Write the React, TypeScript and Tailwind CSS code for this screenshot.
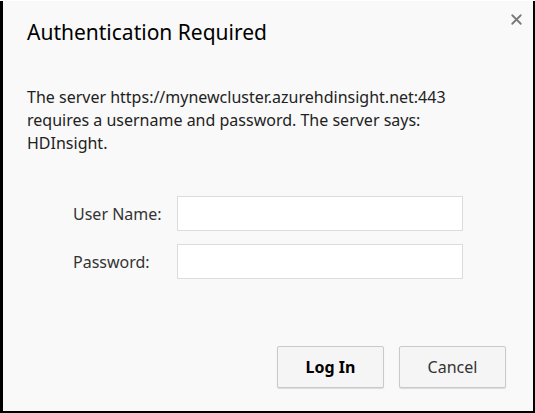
import { X } from 'lucide-react';

export default function App() {
  return (
    <div className="w-[535px] h-[413px] bg-black">
      <div
        className="relative ml-[3px] mt-px w-[530px] h-[410px] bg-[#f9f9f9] flex flex-col pl-6 pr-[27px] text-[#222]"
        style={{ fontFamily: '"Noto Sans", "Open Sans", sans-serif' }}
      >
        <button className="absolute right-[8px] top-[10px] text-[#7a7a7a]">
          <X className="w-[17px] h-[17px]" strokeWidth={2.6} />
        </button>

        <h1 className="mt-[17px] text-[21px] leading-7 text-black">Authentication Required</h1>

        <p className="mt-[40px] text-[16px] leading-[23px]">
          The server https://mynewcluster.azurehdinsight.net:443
          <br />
          requires a username and password. The server says:
          <br />
          HDInsight.
        </p>

        <div className="mt-[41px] flex flex-col gap-[13px] pl-[46px]">
          <div className="flex items-center">
            <label className="w-[104px] text-[16px] text-[#333]">User Name:</label>
            <input className="w-[286px] h-[35px] bg-white border border-[#dcdcdc] outline-none" />
          </div>
          <div className="flex items-center">
            <label className="w-[104px] text-[16px] text-[#333]">Password:</label>
            <input type="password" className="w-[286px] h-[35px] bg-white border border-[#dcdcdc] outline-none" />
          </div>
        </div>

        <div className="mt-auto mb-[23px] flex justify-end gap-[15px]">
          <button className="w-[107px] h-[42px] rounded-[2px] border border-[#c9c9c9] bg-[#f5f5f5] shadow-[0_1px_1px_rgba(0,0,0,0.12)] text-[16px] font-bold text-black">
            Log In
          </button>
          <button className="w-[107px] h-[42px] rounded-[2px] border border-[#c9c9c9] bg-[#f5f5f5] shadow-[0_1px_1px_rgba(0,0,0,0.12)] text-[16px] text-[#333]">
            Cancel
          </button>
        </div>
      </div>
    </div>
  );
}
